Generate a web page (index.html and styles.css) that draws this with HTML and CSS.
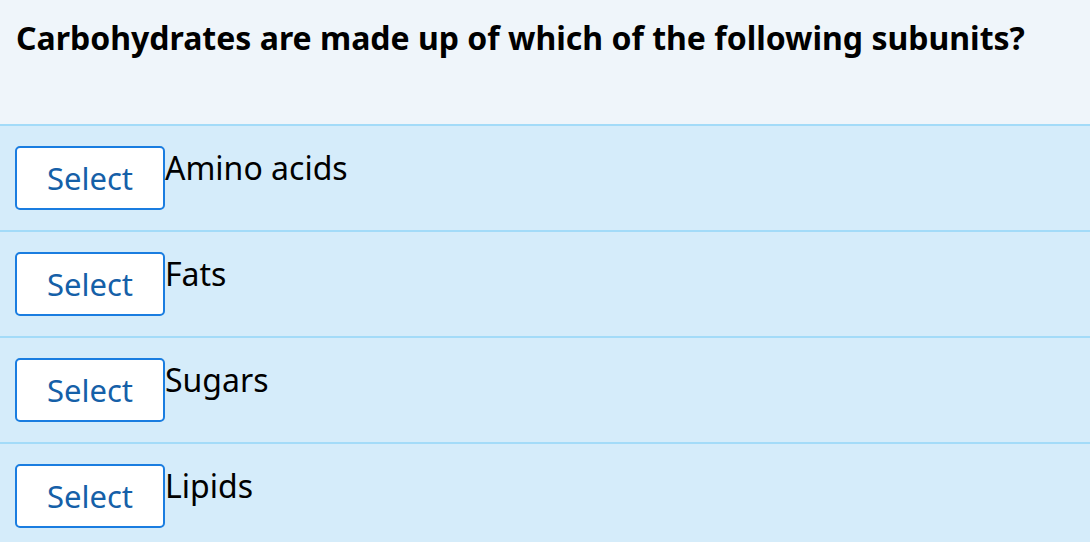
FILE: index.html
```html
<!DOCTYPE html>
<html>
<head>
<meta charset="utf-8">
<link rel="stylesheet" href="styles.css">
</head>
<body>
<div class="quiz">
  <div class="question">Carbohydrates are made up of which of the following subunits?</div>
  <div class="option"><button class="select-btn">Select</button><span class="label">Amino acids</span></div>
  <div class="option"><button class="select-btn">Select</button><span class="label">Fats</span></div>
  <div class="option"><button class="select-btn">Select</button><span class="label">Sugars</span></div>
  <div class="option"><button class="select-btn">Select</button><span class="label">Lipids</span></div>
</div>
</body>
</html>
```
FILE: styles.css
```css
html, body {
  margin: 0;
  padding: 0;
}
body {
  font-family: "Noto Sans", "Open Sans", sans-serif;
  background: #d5ecfa;
  color: #000;
}
.quiz {
  display: flex;
  flex-direction: column;
}
.question {
  box-sizing: border-box;
  height: 126px;
  padding: 16px 16px 0;
  background: #eff5fa;
  border-bottom: 2px solid #a3dbf8;
  font-size: 32px;
  font-weight: 700;
  line-height: normal;
}
.option {
  box-sizing: border-box;
  height: 106px;
  display: flex;
  align-items: flex-start;
  padding: 20px 15px;
  background: #d5ecfa;
  border-bottom: 2px solid #a3dbf8;
}
.select-btn {
  box-sizing: border-box;
  width: 150px;
  height: 64px;
  background: #fff;
  border: 2px solid #1a7de0;
  border-radius: 5px;
  color: #1560a8;
  font-family: "Noto Sans", "Open Sans", sans-serif;
  font-size: 31px;
  padding: 0;
  margin: 0;
}
.label {
  font-size: 32px;
  line-height: normal;
}
```
